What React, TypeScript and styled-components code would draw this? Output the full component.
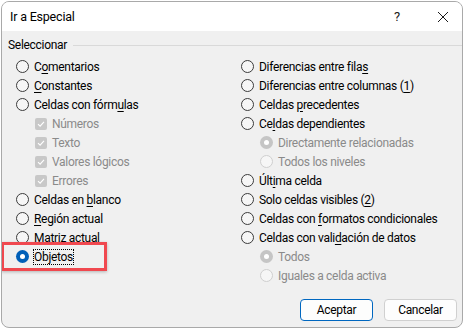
import styled, { createGlobalStyle, css } from 'styled-components';
import type { ReactNode } from 'react';

const GlobalStyle = createGlobalStyle`
  html, body {
    margin: 0;
    padding: 0;
    background: #ffffff;
  }
  body {
    font-family: Roboto, "Noto Sans", sans-serif;
    font-size: 12px;
    letter-spacing: -0.3px;
    color: #000;
  }
`;

type Item = {
  label: ReactNode;
  kind: 'radio' | 'check';
  level?: 0 | 1;
  disabled?: boolean;
  checked?: boolean;
  focused?: boolean;
};

const U = ({ children }: { children: ReactNode }) => <Under>{children}</Under>;

const leftItems: Item[] = [
  { kind: 'radio', label: <>C<U>o</U>mentarios</> },
  { kind: 'radio', label: <><U>C</U>onstantes</> },
  { kind: 'radio', label: <>Celdas con fórm<U>u</U>las</> },
  { kind: 'check', level: 1, disabled: true, checked: true, label: 'Números' },
  { kind: 'check', level: 1, disabled: true, checked: true, label: 'Texto' },
  { kind: 'check', level: 1, disabled: true, checked: true, label: 'Valores lógicos' },
  { kind: 'check', level: 1, disabled: true, checked: true, label: 'Errores' },
  { kind: 'radio', label: <>Celdas en <U>b</U>lanco</> },
  { kind: 'radio', label: <><U>R</U>egión actual</> },
  { kind: 'radio', label: 'Matriz actual' },
  { kind: 'radio', checked: true, focused: true, label: <>Ob<U>j</U>etos</> },
];

const rightItems: Item[] = [
  { kind: 'radio', label: <>Diferencias entre fila<U>s</U></> },
  { kind: 'radio', label: <>Diferencias entre columnas (<U>1</U>)</> },
  { kind: 'radio', label: <>Celdas <U>p</U>recedentes</> },
  { kind: 'radio', label: <>Ce<U>l</U>das dependientes</> },
  { kind: 'radio', level: 1, disabled: true, checked: true, label: 'Directamente relacionadas' },
  { kind: 'radio', level: 1, disabled: true, label: 'Todos los niveles' },
  { kind: 'radio', label: <>Últ<U>i</U>ma celda</> },
  { kind: 'radio', label: <>Solo celdas visibles (<U>2</U>)</> },
  { kind: 'radio', label: <>Celdas con <U>f</U>ormatos condicionales</> },
  { kind: 'radio', label: <>Celdas con vali<U>d</U>ación de datos</> },
  { kind: 'radio', level: 1, disabled: true, checked: true, label: 'Todos' },
  { kind: 'radio', level: 1, disabled: true, label: 'Iguales a celda activa' },
];

const CheckMark = () => (
  <svg width="8" height="8" viewBox="0 0 8 8">
    <path d="M1 4.2 L3.1 6.2 L7 1.8" fill="none" stroke="#fff" strokeWidth="1.1" />
  </svg>
);

const Option = ({ item }: { item: Item }) => (
  <Row $level={item.level ?? 0} $disabled={!!item.disabled}>
    {item.kind === 'radio' ? (
      <Radio $checked={!!item.checked} $disabled={!!item.disabled} />
    ) : (
      <Check $disabled={!!item.disabled}>{item.checked && <CheckMark />}</Check>
    )}
    <Label $focused={!!item.focused}>{item.label}</Label>
    {item.focused && <Highlight />}
  </Row>
);

const App = () => (
  <>
    <GlobalStyle />
    <Dialog>
      <TitleBar>
        <Title>Ir a Especial</Title>
        <HelpButton>?</HelpButton>
        <CloseButton>
          <svg width="12" height="12" viewBox="0 0 12 12">
            <path d="M1 1 L11 11 M11 1 L1 11" stroke="#1a1a1a" strokeWidth="1" />
          </svg>
        </CloseButton>
      </TitleBar>
      <Body>
        <GroupHeader>
          <span>Seleccionar</span>
          <GroupLine />
        </GroupHeader>
        <Columns>
          <Column>
            {leftItems.map((it, i) => (
              <Option key={i} item={it} />
            ))}
          </Column>
          <Column>
            {rightItems.map((it, i) => (
              <Option key={i} item={it} />
            ))}
          </Column>
        </Columns>
        <Buttons>
          <Button $primary>Aceptar</Button>
          <Button>Cancelar</Button>
        </Buttons>
      </Body>
    </Dialog>
  </>
);

const Dialog = styled.div`
  margin: 1px 0 0 1px;
  width: 462px;
  height: 327px;
  box-sizing: border-box;
  border: 1px solid #a9a9a9;
  border-radius: 8px;
  overflow: hidden;
  display: flex;
  flex-direction: column;
  background: #f0f0f0;
`;

const TitleBar = styled.div`
  height: 29px;
  flex: none;
  background: #ffffff;
  display: flex;
  align-items: center;
  padding-left: 8px;
`;

const Title = styled.div`
  flex: 1;
  font-size: 12.5px;
  letter-spacing: -0.2px;
  color: #000;
`;

const HelpButton = styled.div`
  width: 20px;
  margin-right: 17px;
  text-align: center;
  font-size: 13px;
  color: #1a1a1a;
`;

const CloseButton = styled.div`
  width: 38px;
  display: flex;
  justify-content: center;
  align-items: center;
`;

const Body = styled.div`
  flex: 1;
  position: relative;
  display: flex;
  flex-direction: column;
  padding: 6px 0 0 6px;
`;

const GroupHeader = styled.div`
  display: flex;
  align-items: center;
  gap: 6px;
  height: 16px;
  color: #000;
`;

const GroupLine = styled.div`
  flex: 1;
  height: 1px;
  background: #d9d9d9;
  margin-top: 1px;
`;

const Columns = styled.div`
  display: grid;
  grid-template-columns: 225px 1fr;
  margin: 4px 0 0 8px;
`;

const Column = styled.div`
  display: flex;
  flex-direction: column;
`;

const Row = styled.div<{ $level: number; $disabled: boolean }>`
  position: relative;
  height: 19px;
  display: flex;
  align-items: center;
  gap: 5px;
  padding-left: ${({ $level }) => ($level ? 19 : 0)}px;
  color: ${({ $disabled }) => ($disabled ? '#8a8a8a' : '#000')};
  white-space: nowrap;
`;

const Radio = styled.span<{ $checked: boolean; $disabled: boolean }>`
  flex: none;
  width: 13px;
  height: 13px;
  box-sizing: border-box;
  border-radius: 50%;
  border: 1px solid #3b3b3b;
  background: #f6f6f6;
  position: relative;

  ${({ $disabled, $checked }) =>
    $disabled &&
    !$checked &&
    css`
      border-color: #cfcfcf;
      background: #f6f6f6;
    `}

  ${({ $checked, $disabled }) =>
    $checked &&
    css`
      border: none;
      background: ${$disabled ? '#c5c5c5' : '#005fb8'};
      &::after {
        content: '';
        position: absolute;
        left: 4px;
        top: 4px;
        width: 5px;
        height: 5px;
        border-radius: 50%;
        background: #fff;
      }
    `}
`;

const Check = styled.span<{ $disabled: boolean }>`
  flex: none;
  width: 12px;
  height: 12px;
  border-radius: 2px;
  background: ${({ $disabled }) => ($disabled ? '#c8c8c8' : '#005fb8')};
  display: flex;
  align-items: center;
  justify-content: center;
`;

const Label = styled.span<{ $focused: boolean }>`
  line-height: 14px;
  ${({ $focused }) =>
    $focused &&
    css`
      outline: 1px dotted #000;
      outline-offset: 0;
    `}
`;

const Under = styled.span`
  text-decoration: underline;
  text-underline-offset: 2px;
`;

const Highlight = styled.div`
  position: absolute;
  left: -15px;
  top: -5px;
  width: 100px;
  height: 23px;
  border: 3px solid #f0484f;
  box-shadow: 0 1px 3px rgba(0, 0, 0, 0.25);
  pointer-events: none;
`;

const Buttons = styled.div`
  margin-top: auto;
  display: flex;
  justify-content: flex-end;
  gap: 11px;
  padding: 0 5px 6px 0;
`;

const Button = styled.div<{ $primary?: boolean }>`
  width: 73px;
  height: 22px;
  box-sizing: border-box;
  border-radius: 4px;
  background: #fdfdfd;
  border: 1px solid ${({ $primary }) => ($primary ? '#0067c0' : '#d0d0d0')};
  display: flex;
  align-items: center;
  justify-content: center;
  color: #000;
`;

export default App;
